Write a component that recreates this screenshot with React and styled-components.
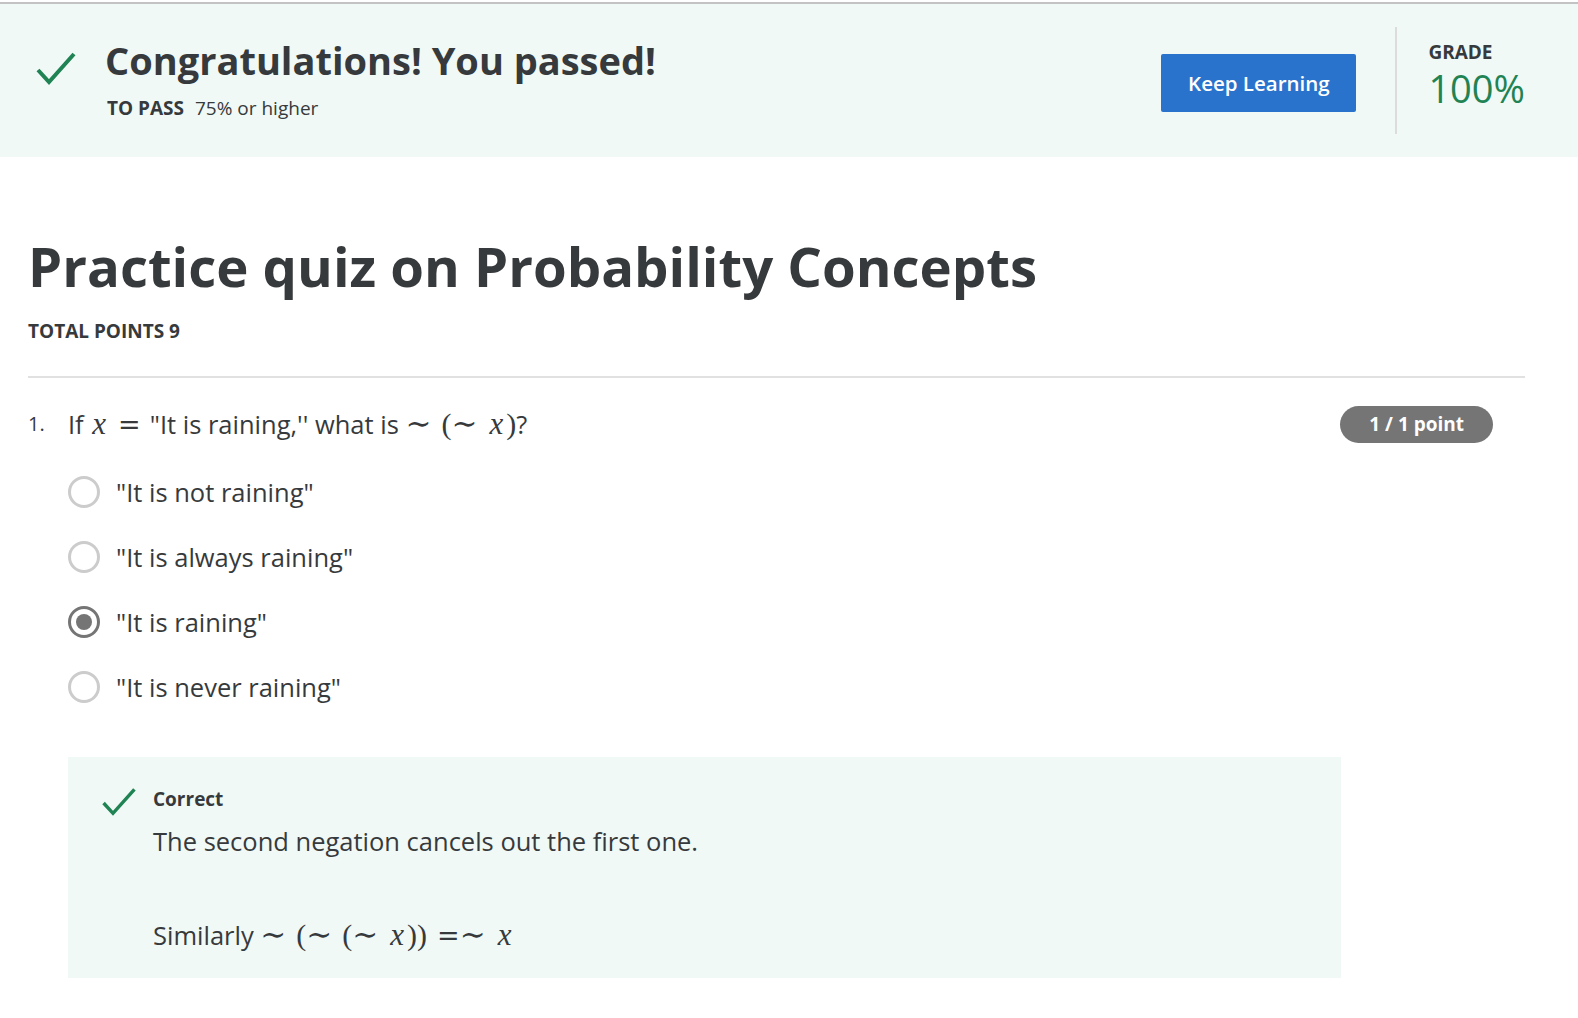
import React from 'react';
import styled, { createGlobalStyle } from 'styled-components';

const GlobalStyle = createGlobalStyle`
  html, body {
    margin: 0;
    padding: 0;
    background: #ffffff;
  }
  body {
    font-family: 'Open Sans', 'Liberation Sans', sans-serif;
    color: #373a3c;
  }
`;

const options = [
  { label: '"It is not raining"', checked: false },
  { label: '"It is always raining"', checked: false },
  { label: '"It is raining"', checked: true },
  { label: '"It is never raining"', checked: false },
];

function CheckIcon({ size = 42 }) {
  return (
    <svg width={size} height={size} viewBox="0 0 42 42" fill="none">
      <path d="M3 21 L14 33 L39 5" stroke="#1f8354" strokeWidth="4" />
    </svg>
  );
}

const Sim = ({ l = 0, r = 10 }) => (
  <MathOp $l={l} $r={r}>∼</MathOp>
);

function App() {
  return (
    <Page>
      <GlobalStyle />
      <Banner>
        <BannerLeft>
          <BannerIcon>
            <CheckIcon />
          </BannerIcon>
          <div>
            <BannerTitle>Congratulations! You passed!</BannerTitle>
            <PassLine>
              <b>TO PASS</b> 75% or higher
            </PassLine>
          </div>
        </BannerLeft>
        <BannerRight>
          <KeepButton type="button">Keep Learning</KeepButton>
          <Divider />
          <Grade>
            <GradeLabel>GRADE</GradeLabel>
            <GradeValue>100%</GradeValue>
          </Grade>
        </BannerRight>
      </Banner>

      <Main>
        <QuizTitle>Practice quiz on Probability Concepts</QuizTitle>
        <TotalPoints>TOTAL POINTS 9</TotalPoints>
        <Rule />

        <Question>
          <QNumber>1.</QNumber>
          <QBody>
            <QHeader>
              <QText>
                If <MathI>x</MathI>
                <MathEq $l={9} $r={9}>=</MathEq>"It is raining,'' what is{' '}
                <Sim />
                <MathR>(</MathR>
                <Sim />
                <MathI>x</MathI>
                <MathR>)</MathR>?
              </QText>
              <PointBadge>1 / 1 point</PointBadge>
            </QHeader>
            <OptionList>
              {options.map((opt) => (
                <Option key={opt.label}>
                  <Radio checked={opt.checked} />
                  <span>{opt.label}</span>
                </Option>
              ))}
            </OptionList>
            <Feedback>
              <FeedbackIcon>
                <CheckIcon size={36} />
              </FeedbackIcon>
              <div>
                <FeedbackTitle>Correct</FeedbackTitle>
                <FeedbackText>The second negation cancels out the first one.</FeedbackText>
                <FeedbackText spaced>
                  Similarly <Sim />
                  <MathR>(</MathR>
                  <Sim />
                  <MathR>(</MathR>
                  <Sim />
                  <MathI>x</MathI>
                  <MathR>))</MathR>
                  <MathEq $l={10} $r={0}>=</MathEq>
                  <Sim />
                  <MathI>x</MathI>
                </FeedbackText>
              </div>
            </Feedback>
          </QBody>
        </Question>
      </Main>
    </Page>
  );
}

export default App;

const Page = styled.div`
  padding-top: 2px;
  min-height: 1018px;
  box-sizing: border-box;
`;

const Banner = styled.div`
  display: flex;
  justify-content: space-between;
  align-items: center;
  height: 155px;
  box-sizing: border-box;
  border-top: 2px solid #c3c3c3;
  background-color: #f0f9f6;
  padding: 0 53px 0 35px;
`;

const BannerLeft = styled.div`
  display: flex;
  align-items: flex-start;
  gap: 28px;
  margin-top: -4px;
`;

const BannerIcon = styled.div`
  padding-top: 13px;
`;

const BannerTitle = styled.h1`
  margin: 0;
  font-size: 38px;
  font-weight: 700;
  line-height: 48px;
  color: #373a3c;
`;

const PassLine = styled.div`
  margin-top: 11px;
  padding-left: 2px;
  font-size: 19px;
  line-height: 26px;
  color: #373a3c;
  b {
    font-weight: 700;
    margin-right: 6px;
  }
`;

const BannerRight = styled.div`
  display: flex;
  align-items: center;
  height: 100%;
`;

const KeepButton = styled.button`
  width: 195px;
  height: 58px;
  margin-top: 4px;
  background-color: #2a73cc;
  color: #ffffff;
  border: none;
  border-radius: 2px;
  font-family: 'Open Sans', sans-serif;
  font-size: 20.5px;
  font-weight: 600;
  cursor: pointer;
`;

const Divider = styled.div`
  width: 2px;
  height: 107px;
  background-color: #dcdcdc;
  margin: 0 31px 0 39px;
`;

const Grade = styled.div`
  display: flex;
  flex-direction: column;
  gap: 4px;
  margin-top: -9px;
`;

const GradeLabel = styled.div`
  font-size: 19px;
  font-weight: 700;
  color: #373a3c;
  line-height: 20px;
`;

const GradeValue = styled.div`
  font-size: 38px;
  color: #1f8354;
  line-height: 44px;
`;

const Main = styled.div`
  padding: 74px 53px 40px 28px;
`;

const QuizTitle = styled.h2`
  margin: 0;
  font-size: 54.5px;
  font-weight: 700;
  line-height: 70px;
  color: #373a3c;
`;

const TotalPoints = styled.div`
  margin-top: 17px;
  font-size: 19px;
  font-weight: 700;
  line-height: 26px;
`;

const Rule = styled.hr`
  margin: 32px 0 0;
  border: none;
  border-top: 2px solid #e1e1e1;
`;

const Question = styled.div`
  display: flex;
  margin-top: 27px;
`;

const QNumber = styled.div`
  width: 40px;
  font-size: 20px;
  line-height: 38px;
`;

const QBody = styled.div`
  flex: 1;
`;

const QHeader = styled.div`
  display: flex;
  justify-content: space-between;
  align-items: center;
  padding-right: 32px;
`;

const QText = styled.div`
  font-size: 25.5px;
  line-height: 38px;
`;

const MathI = styled.span`
  font-family: 'Liberation Serif', 'DejaVu Serif', serif;
  font-style: italic;
  font-size: 31px;
  line-height: 1;
  margin: 0 3px 0 2px;
`;

const MathR = styled.span`
  font-family: 'Liberation Serif', 'DejaVu Serif', serif;
  font-size: 30px;
  line-height: 1;
`;

const MathOp = styled.span`
  font-family: 'DejaVu Serif', 'Liberation Serif', serif;
  font-size: 31px;
  line-height: 1;
  margin: 0 ${({ $r }) => $r}px 0 ${({ $l }) => $l}px;
`;

const MathEq = styled.span`
  font-family: 'DejaVu Serif', 'Liberation Serif', serif;
  font-size: 27px;
  line-height: 1;
  margin: 0 ${({ $r }) => $r}px 0 ${({ $l }) => $l}px;
`;

const PointBadge = styled.div`
  background-color: #757575;
  color: #ffffff;
  font-size: 19px;
  font-weight: 700;
  height: 37px;
  line-height: 37px;
  padding: 0 29px;
  border-radius: 19px;
`;

const OptionList = styled.div`
  display: flex;
  flex-direction: column;
  margin-top: 16px;
`;

const Option = styled.label`
  display: flex;
  align-items: center;
  gap: 16px;
  height: 65px;
  font-size: 25.5px;
`;

const Radio = styled.span`
  width: 32px;
  height: 32px;
  box-sizing: border-box;
  border-radius: 50%;
  border: 3px solid ${({ checked }) => (checked ? '#757575' : '#cccccc')};
  display: flex;
  align-items: center;
  justify-content: center;
  &::after {
    content: '';
    display: ${({ checked }) => (checked ? 'block' : 'none')};
    width: 16px;
    height: 16px;
    border-radius: 50%;
    background-color: #757575;
  }
`;

const Feedback = styled.div`
  display: flex;
  gap: 16px;
  margin-top: 38px;
  width: 1273px;
  box-sizing: border-box;
  background-color: #f0f9f6;
  padding: 28px 0 24px 33px;
`;

const FeedbackIcon = styled.div`
  padding-top: 0px;
`;

const FeedbackTitle = styled.div`
  font-size: 19px;
  font-weight: 700;
  line-height: 28px;
`;

const FeedbackText = styled.div`
  font-size: 25.5px;
  line-height: 38px;
  margin-top: ${({ spaced }) => (spaced ? '56px' : '9px')};
`;
